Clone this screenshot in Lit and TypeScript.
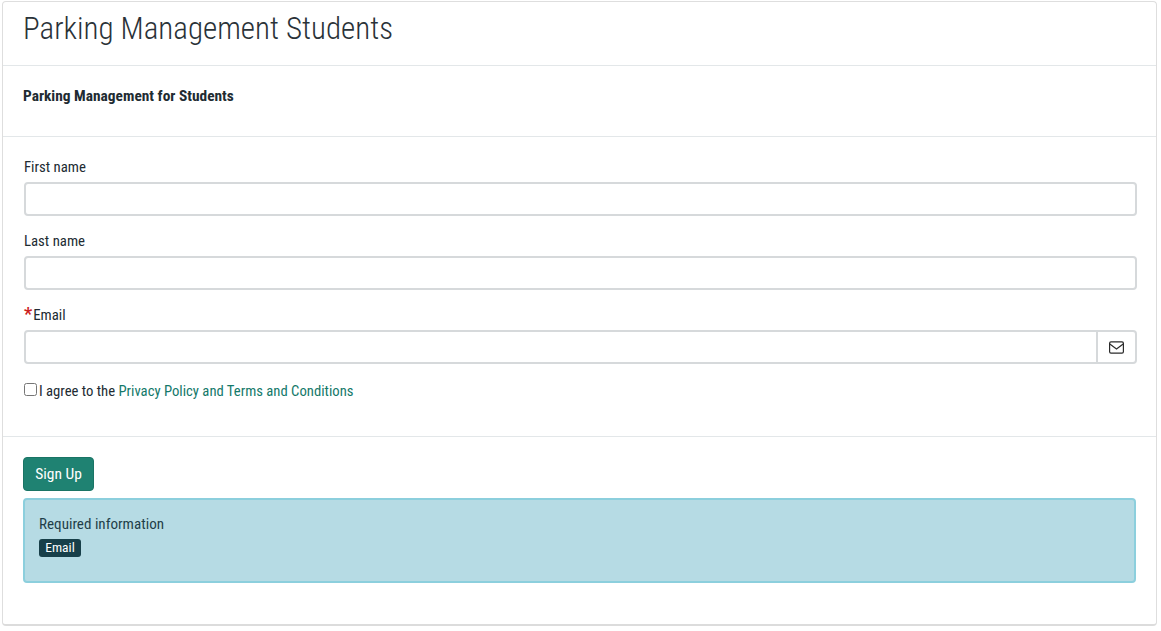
import { LitElement, html, css } from "lit";
import { customElement } from "lit/decorators.js";

@customElement("app-root")
export class AppRoot extends LitElement {
  static styles = css`
    :host {
      display: block;
      font-family: "Roboto", "Liberation Sans", sans-serif;
      font-stretch: condensed;
      color: #212b32;
      font-size: 14.8px;
    }
    * { box-sizing: border-box; }
    .card {
      margin: 1px 4px 0 2px;
      height: 625px;
      background: #fff;
      border: 1px solid #dedede;
      border-bottom: 2px solid #dcdcdc;
      border-radius: 4px;
      display: flex;
      flex-direction: column;
    }
    .head {
      height: 64px;
      border-bottom: 1px solid #e3e7e9;
      padding: 0 20px;
      display: flex;
      align-items: center;
    }
    h1 {
      margin: 0 0 10px;
      font-size: 31px;
      font-weight: 300;
      line-height: 40px;
      color: #2a3238;
    }
    .desc {
      height: 71px;
      border-bottom: 1px solid #e3e7e9;
      padding: 20px 20px 0;
      font-weight: 700;
      font-size: 15.4px;
      line-height: 20px;
    }
    .form {
      height: 300px;
      border-bottom: 1px solid #e3e7e9;
      padding: 20px 19px 0 21px;
      display: flex;
      flex-direction: column;
    }
    .field { height: 74px; display: flex; flex-direction: column; }
    label { display: block; height: 25px; line-height: 20px; }
    .req { color: #cc1f1f; font-weight: 700; margin-right: 1px; font-size: 18px; line-height: 14px; }
    .input {
      height: 34px;
      border: 2px solid #d6d9db;
      border-radius: 4px;
      background: #fff;
      width: 100%;
      display: block;
      flex: none;
    }
    .group { display: flex; height: 34px; flex: none; }
    .group .input { flex: 1; border-radius: 4px 0 0 4px; width: auto; }
    .addon {
      width: 39px;
      border: 2px solid #d6d9db;
      border-left: 0;
      border-radius: 0 4px 4px 0;
      display: flex;
      align-items: center;
      justify-content: center;
    }
    .addon svg { width: 15px; height: 13px; display: block; }
    .agree { display: flex; align-items: center; height: 20px; margin-top: 2px; font-size: 14.7px; }
    .check {
      width: 13px; height: 13px; margin: -3px 2px 0 0;
      border: 1px solid #767676; border-radius: 2.5px; background: #fff; flex: none;
    }
    a { color: #14796a; text-decoration: none; }
    .foot { padding: 20px 20px 0; flex: 1; }
    button {
      display: block;
      width: 71px;
      height: 34px;
      background: #1f8272;
      border: 1px solid #1a7465;
      border-radius: 4px;
      color: #fff;
      font: inherit;
      font-size: 15.5px;
      padding: 0;
    }
    .alert {
      margin-top: 7px;
      height: 85px;
      background: #b6dbe4;
      border: 2px solid #8ccfdd;
      border-radius: 4px;
      padding: 14px;
      color: #1f3f49;
    }
    .alert p { margin: 0; line-height: 20px; font-size: 15.1px; }
    .badge {
      display: inline-block;
      margin-top: 5px;
      height: 18px;
      width: 42px;
      line-height: 17px;
      text-align: center;
      background: #173f49;
      color: #fff;
      border-radius: 3px;
      font-size: 13.5px;
    }
  `;

  render() {
    return html`
      <div class="card">
        <div class="head"><h1>Parking Management Students</h1></div>
        <div class="desc">Parking Management for Students</div>
        <div class="form">
          <div class="field"><label>First name</label><div class="input"></div></div>
          <div class="field"><label>Last name</label><div class="input"></div></div>
          <div class="field">
            <label><span class="req">*</span>Email</label>
            <div class="group">
              <div class="input"></div>
              <div class="addon">
                <svg viewBox="0 0 15 13" fill="none" stroke="#2b2b2b" stroke-width="1.2">
                  <rect x="0.6" y="0.9" width="13.8" height="11.2" rx="1.4"></rect>
                  <path d="M0.8 3 L7.5 8 L14.2 3"></path>
                </svg>
              </div>
            </div>
          </div>
          <div class="agree">
            <span class="check"></span>
            <span>I agree to the <a href="#">Privacy Policy and Terms and Conditions</a></span>
          </div>
        </div>
        <div class="foot">
          <button>Sign Up</button>
          <div class="alert">
            <p>Required information</p>
            <span class="badge">Email</span>
          </div>
        </div>
      </div>
    `;
  }
}
